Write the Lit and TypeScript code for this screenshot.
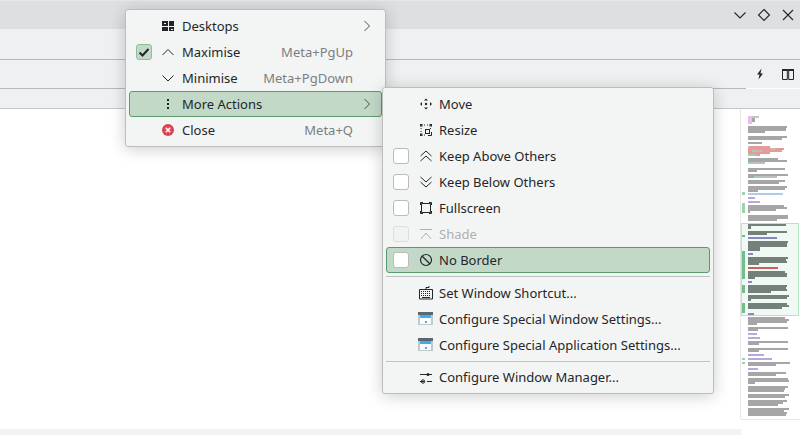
import { LitElement, css, html, svg } from "lit";
import { customElement } from "lit/decorators.js";

type Bar = [number, number, number, number, string];

const G = "#a6a6a6";
const D = "#74807a";
const P = "#b7a8d6";
const V = "#8a86c0";
const R = "#e89a9a";
const M = "#9fd0b0";
const K = "#72bd8a";

// coordinates are in 3x minimap units
const bars: Bar[] = [
  [39, 33, 50, 57, "#e8bfe8"], [50, 33, 72, 40, "#c4c4c4"], [50, 40, 60, 50, G],
  [39, 63, 157, 69, G], [39, 69, 152, 78, G], [39, 78, 90, 85, G],
  [39, 93, 156, 99, G], [39, 99, 140, 105, G], [39, 111, 81, 117, G],
  [39, 124, 105, 130, R], [39, 124, 46, 130, M], [39, 130, 147, 136, R], [108, 130, 120, 136, M],
  [39, 136, 140, 142, R], [52, 136, 70, 142, M], [72, 136, 82, 142, M],
  [39, 142, 105, 148, R], [39, 148, 62, 152, M], [62, 148, 75, 152, R],
  [39, 158, 130, 164, G], [39, 164, 156, 170, G], [39, 170, 90, 176, "#c0c0c0"], [39, 170, 52, 176, M],
  [39, 189, 150, 195, G], [39, 195, 66, 201, G],
  [39, 207, 159, 213, G], [39, 213, 125, 219, "#c0c0c0"], [39, 213, 58, 219, G], [58, 213, 65, 219, M],
  [39, 225, 150, 231, G], [39, 231, 132, 237, G],
  [39, 243, 155, 249, G], [39, 249, 150, 255, G], [39, 255, 70, 261, G],
  [39, 264, 144, 270, "#b0cbe8"], [39, 276, 60, 282, P], [39, 288, 75, 294, P],
  [39, 300, 148, 306, G], [39, 306, 155, 312, G], [39, 312, 122, 318, G], [39, 318, 44, 324, G],
  [39, 330, 159, 336, G], [39, 336, 159, 342, G], [39, 342, 125, 348, G],
  [39, 358, 153, 364, D], [39, 364, 48, 372, D], [39, 378, 156, 384, D], [39, 384, 96, 390, D],
  [39, 396, 126, 402, V], [39, 408, 158, 414, D], [39, 414, 155, 420, D], [39, 420, 155, 426, D], [39, 426, 75, 438, D],
  [39, 444, 54, 450, V], [39, 456, 158, 462, D], [39, 462, 152, 468, D], [39, 468, 155, 474, D], [39, 474, 72, 480, D],
  [39, 486, 130, 492, "#c8605c"],
  [39, 498, 150, 504, D], [39, 504, 156, 510, D], [39, 510, 156, 516, D], [39, 516, 60, 522, D],
  [39, 528, 51, 534, V], [39, 540, 156, 546, D], [39, 546, 152, 552, D], [39, 552, 155, 558, D], [39, 558, 108, 564, D],
  [39, 570, 162, 576, D], [39, 576, 156, 582, D], [39, 582, 48, 588, D],
  [39, 594, 156, 600, D], [39, 600, 162, 606, D], [39, 606, 140, 612, D], [39, 624, 57, 630, V],
  [39, 636, 150, 642, G], [39, 642, 162, 648, G], [39, 648, 155, 654, G], [39, 654, 66, 660, G],
  [39, 666, 159, 672, G], [39, 672, 69, 678, G], [39, 684, 66, 690, P], [39, 696, 75, 702, P],
  [39, 708, 159, 714, G], [39, 714, 72, 720, G], [39, 729, 159, 735, G], [39, 735, 72, 741, G],
  [39, 747, 87, 753, P], [39, 759, 111, 765, P], [39, 771, 165, 777, G], [39, 777, 123, 783, G],
  [39, 789, 69, 795, P], [39, 801, 153, 807, G], [39, 807, 123, 813, G],
  [39, 819, 159, 825, G], [39, 825, 162, 831, G], [39, 831, 60, 837, G],
  [39, 843, 159, 849, G], [39, 849, 150, 855, G], [39, 855, 147, 861, G],
  [39, 867, 162, 873, G], [39, 873, 150, 879, G],
  [39, 885, 156, 891, G], [39, 891, 144, 897, G], [39, 897, 129, 903, G],
  [39, 909, 162, 915, G], [39, 915, 147, 921, G], [39, 921, 156, 927, G], [39, 927, 153, 933, G],
];

const marks: Bar[] = [
  [21, 261, 30, 270, M], [21, 294, 30, 324, M], [21, 390, 30, 396, K], [21, 438, 30, 522, K],
  [21, 540, 30, 564, K], [21, 594, 30, 624, K], [21, 759, 30, 765, M], [21, 771, 30, 777, M],
];

const rect = (b: Bar) =>
  svg`<rect x=${b[0]} y=${b[1]} width=${b[2] - b[0]} height=${b[3] - b[1]} fill=${b[4]} />`;

const icons: Record<string, unknown> = {
  desktops: svg`<g fill="currentColor"><path fill-rule="evenodd" d="M1 3h6v5H1z M3 5h2v1H3z"/><rect x="8" y="3" width="5" height="5"/><rect x="1" y="9" width="6" height="4"/><path fill-rule="evenodd" d="M8 9h5v4H8z M10 11h2v1h-2z"/></g>`,
  up: svg`<path d="M1.5 11L7 5.5 12.5 11" fill="none" stroke="currentColor"/>`,
  down: svg`<path d="M1.5 5.5L7 11l5.5-5.5" fill="none" stroke="currentColor"/>`,
  dots: svg`<g fill="currentColor"><rect x="6" y="3" width="2" height="2"/><rect x="6" y="7" width="2" height="2"/><rect x="6" y="11" width="2" height="2"/></g>`,
  close: svg`<circle cx="7" cy="8" r="6" fill="#da4453"/><path d="M4.8 5.8l4.4 4.4M9.2 5.8l-4.4 4.4" stroke="#fff" stroke-width="1.6"/>`,
  move: svg`<g fill="currentColor"><path d="M8 2.5l2 2H6zM8 13.5l-2-2h4zM2 8l2-2v4zM14 8l-2 2V6z"/><circle cx="8" cy="8" r="1.2"/></g>`,
  resize: svg`<g fill="none" stroke="currentColor"><rect x="2.5" y="2.5" width="1.5" height="1.5"/><rect x="12" y="2.5" width="1.5" height="1.5"/><rect x="2.5" y="12" width="1.5" height="1.5"/><rect x="7.5" y="7.5" width="4" height="4"/><path d="M6 3h1M9 3h1M3 6v1M3 9v1M12.5 6v1M6 13h1M13.5 10v3.5H10"/></g>`,
  above: svg`<path d="M2.5 8l5.5-5 5.5 5M2.5 13l5.5-5 5.5 5" fill="none" stroke="currentColor"/>`,
  below: svg`<path d="M2.5 3l5.5 5 5.5-5M2.5 8l5.5 5 5.5-5" fill="none" stroke="currentColor"/>`,
  fullscreen: svg`<path d="M3.5 3.5h9v9h-9z" fill="none" stroke="currentColor"/><path d="M2.5 5V2.5H5M11 2.5h2.5V5M13.5 11v2.5H11M5 13.5H2.5V11" fill="none" stroke="currentColor"/>`,
  shade: svg`<path d="M2 3.5h12M3 13l5-6 5 6" fill="none" stroke="currentColor"/>`,
  noborder: svg`<circle cx="8" cy="8" r="5.5" fill="none" stroke="currentColor" stroke-width="1.2"/><path d="M4 4l8 8" stroke="currentColor" stroke-width="1.2"/>`,
  keyboard: svg`<path d="M1.5 4.5h13v9.5h-13z" fill="none" stroke="currentColor"/><path d="M8 4.5V2.5h3V1" fill="none" stroke="currentColor"/><path d="M3 6.5h10M3 8.5h10M3 10.5h10" stroke="currentColor" stroke-dasharray="1 1"/><path d="M4 12.5h8" stroke="currentColor"/>`,
  special: svg`<rect x="0" y="1" width="15" height="13" fill="#c3c8cb"/><rect x="0" y="1" width="15" height="3" fill="#5c666e"/><rect x="2" y="4" width="11" height="9" fill="#fcfcfc"/><rect x="2" y="4" width="11" height="3" fill="#3daee9"/><rect x="7" y="10" width="2" height="2" fill="#3daee9"/>`,
  manager: svg`<path d="M2 5.5h12M2 12.5h4.5M9 12.5h5" stroke="currentColor"/><circle cx="10" cy="5.5" r="1.5" fill="currentColor"/><circle cx="5" cy="12.5" r="1.7" fill="none" stroke="currentColor"/>`,
};

interface Item {
  label?: string;
  icon?: string;
  check?: "on" | "off" | "dis";
  keys?: string;
  sub?: boolean;
  active?: boolean;
  disabled?: boolean;
  sep?: "wide" | "tight";
}

const windowMenu: Item[] = [
  { label: "Desktops", icon: "desktops", sub: true },
  { label: "Maximise", icon: "up", check: "on", keys: "Meta+PgUp" },
  { label: "Minimise", icon: "down", keys: "Meta+PgDown" },
  { label: "More Actions", icon: "dots", sub: true, active: true },
  { label: "Close", icon: "close", keys: "Meta+Q" },
];

const moreMenu: Item[] = [
  { label: "Move", icon: "move" },
  { label: "Resize", icon: "resize" },
  { label: "Keep Above Others", icon: "above", check: "off" },
  { label: "Keep Below Others", icon: "below", check: "off" },
  { label: "Fullscreen", icon: "fullscreen", check: "off" },
  { label: "Shade", icon: "shade", check: "dis", disabled: true },
  { label: "No Border", icon: "noborder", check: "off", active: true },
  { sep: "wide" },
  { label: "Set Window Shortcut...", icon: "keyboard" },
  { label: "Configure Special Window Settings...", icon: "special" },
  { label: "Configure Special Application Settings...", icon: "special" },
  { sep: "tight" },
  { label: "Configure Window Manager...", icon: "manager" },
];

@customElement("app-root")
export class AppRoot extends LitElement {
  static styles = css`
    :host {
      display: block;
      position: relative;
      width: 800px;
      height: 435px;
      overflow: hidden;
      background: #fff;
      font-family: "Noto Sans", sans-serif;
      font-size: 13px;
      color: #232629;
    }
    svg { display: block; }

    .titlebar {
      height: 28px;
      border-top: 1px solid #e6e7e8;
      background: #dedfe0;
      display: flex;
      justify-content: flex-end;
      align-items: center;
      gap: 8px;
      padding-right: 4px;
    }
    .titlebar svg { width: 16px; height: 16px; }
    .toolbar {
      height: 30px;
      background: #eff0f1;
      border-bottom: 1px solid #b6b8b9;
    }
    .actions {
      height: 28px;
      background: #eff0f1;
      display: flex;
      justify-content: flex-end;
      align-items: center;
      gap: 12px;
      padding-right: 4px;
      box-sizing: border-box;
    }
    .actions svg { width: 16px; height: 16px; }
    .rule { height: 1px; width: 746px; background: #b6b8b9; }
    .tabs {
      height: 19px;
      background: #eff0f1;
      border-bottom: 1px solid #c4c6c7;
    }
    .editor { display: flex; justify-content: flex-end; height: 326px; }
    .map { width: 65px; height: 326px; }

    .footer { height: 6px; width: 741px; background: #f3f3f4; margin-top: -6px; }

    .menu {
      position: absolute;
      box-sizing: border-box;
      background: #f3f5f4;
      border: 1px solid #bcbebe;
      border-radius: 3px;
      padding: 3px;
      box-shadow: 0 2px 16px rgba(0, 0, 0, 0.2);
    }
    .window-menu { left: 125px; top: 9px; width: 261px; }
    .more-menu { left: 382px; top: 87px; width: 332px; }

    .row {
      display: flex;
      align-items: center;
      box-sizing: border-box;
      height: 26px;
      padding: 0 6px;
      border: 1px solid transparent;
      border-radius: 3px;
      white-space: nowrap;
    }
    .row.active { background: #c2d9c8; border-color: #5a9a6c; }
    .row.disabled { color: #aeb0b1; }

    .check {
      box-sizing: border-box;
      flex: none;
      width: 16px;
      height: 16px;
      border: 1px solid #b9bbbc;
      border-radius: 3px;
      background: #fff;
    }
    .check.on { background: #c2d9c8; border-color: #8cc09c; }
    .check.dis { background: #f1f2f2; border-color: #dcdedd; }
    .check svg { width: 14px; height: 14px; }
    .no-check { flex: none; width: 16px; }

    .icon { flex: none; width: 16px; height: 16px; margin: 0 5px 0 9px; }
    .label { flex: 1; }
    .keys { color: #7c7e80; margin-right: 22px; }
    .arrow { flex: none; width: 10px; height: 12px; margin-right: 3px; }

    .sep { height: 1px; background: #c1c3c3; }
    .sep.wide { margin: 3px 0; }
    .sep.tight { margin: 3px 0 2px; }
  `;

  private renderItem(item: Item) {
    if (item.sep) return html`<div class="sep ${item.sep}"></div>`;
    const cls = `row${item.active ? " active" : ""}${item.disabled ? " disabled" : ""}`;
    return html`<div class=${cls}>
      ${item.check
        ? html`<span class="check ${item.check}">${item.check === "on"
            ? html`<svg viewBox="0 0 14 14"><path d="M2.5 7.5l3 3 6-6.5" fill="none" stroke="#232629" stroke-width="2"/></svg>`
            : ""}</span>`
        : html`<span class="no-check"></span>`}
      <svg class="icon" viewBox="0 0 16 16">${icons[item.icon!]}</svg>
      <span class="label">${item.label}</span>
      ${item.keys ? html`<span class="keys">${item.keys}</span>` : ""}
      ${item.sub
        ? html`<svg class="arrow" viewBox="0 0 10 12"><path d="M2.5 1l5 5-5 5" fill="none" stroke="#4d4f51"/></svg>`
        : ""}
    </div>`;
  }

  render() {
    return html`
      <div class="titlebar">
        <svg viewBox="0 0 16 16"><path d="M2.5 5.5l5.5 5.5 5.5-5.5" fill="none" stroke="#232629" stroke-width="1.1"/></svg>
        <svg viewBox="0 0 16 16"><path d="M8 2.5l5.5 5.5-5.5 5.5L2.5 8z" fill="none" stroke="#232629" stroke-width="1.1"/></svg>
        <svg viewBox="0 0 16 16"><path d="M3 3l10 10M13 3L3 13" fill="none" stroke="#232629" stroke-width="1.1"/></svg>
      </div>
      <div class="toolbar"></div>
      <div class="actions">
        <svg viewBox="0 0 16 16"><path d="M9.5 2.5L5 8.5h2.5L6.5 13.5l4.5-6H8.5z" fill="#232629"/></svg>
        <svg viewBox="0 0 16 16"><path d="M2.5 3.5h4.8v10H2.5zM8.7 3.5h4.8v10H8.7z" fill="none" stroke="#232629"/><path d="M2 3h5.8v2H2zM8.2 3H14v2H8.2z" fill="#232629"/></svg>
      </div>
      <div class="rule"></div>
      <div class="tabs"></div>
      <div class="editor">
        <svg class="map" viewBox="0 12 195 978" shape-rendering="crispEdges">
          <rect x="16" y="12" width="3" height="930" fill="#e6e6e6" />
          <rect x="18" y="942" width="177" height="3" fill="#e8e8e8" />
          <rect x="19" y="355" width="171" height="276" fill="#f0f9f3" stroke="#b3e6c0" stroke-width="3" />
          ${marks.map(rect)} ${bars.map(rect)}
        </svg>
      </div>
      <div class="footer"></div>
      <div class="menu window-menu">${windowMenu.map((i) => this.renderItem(i))}</div>
      <div class="menu more-menu">${moreMenu.map((i) => this.renderItem(i))}</div>
    `;
  }
}
